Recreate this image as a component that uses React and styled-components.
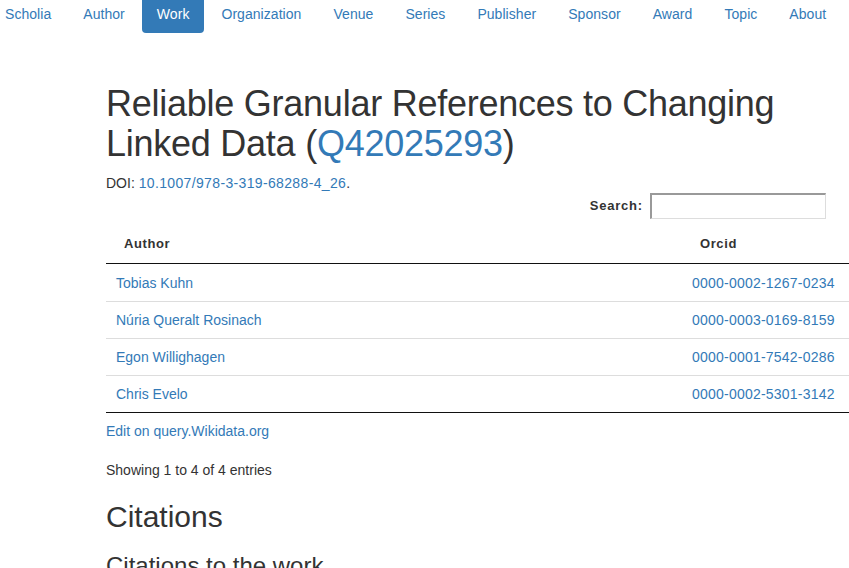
import React from 'react';
import styled, { createGlobalStyle } from 'styled-components';

const GlobalStyle = createGlobalStyle`
  html, body {
    margin: 0;
    padding: 0;
    background: #fff;
    overflow: hidden;
  }
  body {
    font-family: "Liberation Sans", Arial, sans-serif;
    font-size: 14px;
    line-height: 20px;
    color: #333;
  }
  a {
    color: #337ab7;
    text-decoration: none;
  }
`;

const Nav = styled.ul`
  display: flex;
  list-style: none;
  margin: 0 0 0 -10px;
  padding: 0;
  height: 33px;
`;

const NavItem = styled.li`
  margin-left: ${(p) => (p.first ? '0' : '2px')};
`;

const NavLink = styled.a`
  display: block;
  padding: 4px 15px 9px;
  border-radius: 0 0 4px 4px;
  letter-spacing: 0.05px;
  color: ${(p) => (p.active ? '#fff' : '#337ab7')};
  background: ${(p) => (p.active ? '#337ab7' : 'transparent')};
`;

const Main = styled.main`
  margin-left: 106px;
  width: 720px;
`;

const Title = styled.h1`
  font-size: 36px;
  font-weight: 500;
  line-height: 1.1;
  letter-spacing: -0.25px;
  margin: 51px 0 10px;
  color: #333;
`;

const Doi = styled.p`
  margin: 0;
`;

const DigitLink = styled.a`
  letter-spacing: ${(p) => p.spacing || '0.35px'};
`;

const FilterRow = styled.div`
  display: flex;
  justify-content: flex-end;
  align-items: center;
  gap: 7px;
  height: 26px;
  margin-bottom: 5px;
`;

const FilterLabel = styled.label`
  font-weight: bold;
  font-size: 13px;
  letter-spacing: 0.8px;
  color: #333;
`;

const SearchInput = styled.input`
  box-sizing: border-box;
  width: 176px;
  height: 26px;
  border: 2px solid #999;
  border-right: 1px solid #ddd;
  border-bottom: 1px solid #ddd;
  border-radius: 0;
  background: #fff;
  padding: 4px;
`;

const Table = styled.table`
  width: 760px;
  border-collapse: collapse;
  border-bottom: 1px solid #111;
  white-space: nowrap;
`;

const Th = styled.th`
  text-align: left;
  font-weight: bold;
  font-size: 13px;
  letter-spacing: 0.6px;
  padding: 10px 18px 9px;
  border-bottom: 1px solid #111;
  width: ${(p) => p.w || 'auto'};
`;

const Td = styled.td`
  padding: ${(p) => (p.first ? '9px 10px 8px' : '8px 10px')};
  border-top: ${(p) => (p.first ? 'none' : '1px solid #ddd')};
`;

const EditLink = styled.a`
  display: block;
  margin-top: 8px;
`;

const Info = styled.div`
  margin-top: 19px;
`;

const H2 = styled.h2`
  font-size: 30px;
  font-weight: 500;
  line-height: 1.1;
  margin: 20px 0 10px;
`;

const H3 = styled.h3`
  font-size: 24px;
  font-weight: 500;
  line-height: 1.1;
  margin: 20px 0 10px;
`;

const navItems = ['Scholia', 'Author', 'Work', 'Organization', 'Venue', 'Series', 'Publisher', 'Sponsor', 'Award', 'Topic', 'About'];

const authors = [
  ['Tobias Kuhn', '0000-0002-1267-0234'],
  ['Núria Queralt Rosinach', '0000-0003-0169-8159'],
  ['Egon Willighagen', '0000-0001-7542-0286'],
  ['Chris Evelo', '0000-0002-5301-3142'],
];

export default function App() {
  return (
    <>
      <GlobalStyle />
      <nav>
        <Nav>
          {navItems.map((item, i) => (
            <NavItem key={item} first={i === 0}>
              <NavLink href="#" active={item === 'Work'}>{item}</NavLink>
            </NavItem>
          ))}
        </Nav>
      </nav>
      <Main>
        <Title>
          Reliable Granular References to Changing Linked Data (<a href="#">Q42025293</a>)
        </Title>
        <Doi>
          DOI: <DigitLink href="#">10.1007/978-3-319-68288-4_26</DigitLink>.
        </Doi>
        <FilterRow>
          <FilterLabel>Search:</FilterLabel>
          <SearchInput type="search" />
        </FilterRow>
        <Table>
          <thead>
            <tr>
              <Th w="540px">Author</Th>
              <Th>Orcid</Th>
            </tr>
          </thead>
          <tbody>
            {authors.map(([name, orcid], i) => (
              <tr key={name}>
                <Td first={i === 0}><a href="#">{name}</a></Td>
                <Td first={i === 0}><DigitLink href="#" spacing="0.22px">{orcid}</DigitLink></Td>
              </tr>
            ))}
          </tbody>
        </Table>
        <EditLink href="#">Edit on query.Wikidata.org</EditLink>
        <Info>Showing 1 to 4 of 4 entries</Info>
        <H2>Citations</H2>
        <H3>Citations to the work</H3>
      </Main>
    </>
  );
}
